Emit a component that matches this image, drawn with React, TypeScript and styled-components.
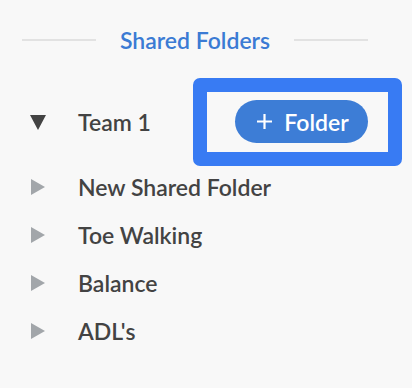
import React from "react";
import styled, { createGlobalStyle } from "styled-components";

const Global = createGlobalStyle`
  html, body { margin: 0; padding: 0; background: #f8f8f8; }
  body { font-family: Lato, "Noto Sans", sans-serif; }
`;

const Page = styled.div`
  width: 412px;
  height: 388px;
  background: #f8f8f8;
  padding-top: 20px;
  box-sizing: border-box;
`;

const Header = styled.div`
  display: flex;
  align-items: center;
  width: 346px;
  margin-left: 22px;
  height: 40px;
  gap: 24px;
`;

const Line = styled.div`
  flex: 1;
  height: 2px;
  background: #e2e2e2;
`;

const Title = styled.div`
  color: #3b7bd4;
  font-size: 23px;
  font-weight: 600;
  white-space: nowrap;
`;

const Tree = styled.div`
  margin-top: 18px;
`;

const TeamRow = styled.div`
  display: grid;
  grid-template-columns: 48px 115px auto;
  align-items: center;
  height: 88px;
  padding-left: 30px;
`;

const Row = styled.div`
  display: grid;
  grid-template-columns: 47px auto;
  align-items: center;
  height: 48px;
  padding-left: 31px;
`;

const Label = styled.span`
  color: #434343;
  font-size: 23px;
  font-weight: 600;
  white-space: nowrap;
`;

const Children = styled.div`
  margin-top: -3px;
`;

const Highlight = styled.div`
  border: 14px solid #387bf3;
  border-radius: 7px;
  width: 133px;
  height: 43px;
  padding: 8px 20px 9px 28px;
  box-sizing: content-box;
  display: flex;
  align-items: flex-start;
`;

const FolderButton = styled.button`
  display: flex;
  align-items: center;
  justify-content: center;
  gap: 11px;
  width: 133px;
  height: 43px;
  border: none;
  border-radius: 22px;
  background: #3d7dd6;
  color: #fff;
  font-family: Lato, "Noto Sans", sans-serif;
  font-size: 23px;
  font-weight: 600;
  padding: 0 0 0 2px;
  cursor: pointer;
`;

const Tri = ({ down, color }: { down?: boolean; color: string }) =>
  down ? (
    <svg width="16" height="15" viewBox="0 0 16 15">
      <polygon points="0,0 16,0 8,15" fill={color} />
    </svg>
  ) : (
    <svg width="14" height="16" viewBox="0 0 14 16">
      <polygon points="0,0 14,8 0,16" fill={color} />
    </svg>
  );

const Plus = () => (
  <svg width="17" height="17" viewBox="0 0 17 17">
    <path d="M8.5 1v15M1 8.5h15" stroke="#fff" strokeWidth="2.2" />
  </svg>
);

const items = ["New Shared Folder", "Toe Walking", "Balance", "ADL's"];

export default function App() {
  return (
    <Page>
      <Global />
      <Header>
        <Line />
        <Title>Shared Folders</Title>
        <Line />
      </Header>
      <Tree>
        <TeamRow>
          <Tri down color="#434343" />
          <Label>Team 1</Label>
          <Highlight>
            <FolderButton>
              <Plus />
              Folder
            </FolderButton>
          </Highlight>
        </TeamRow>
        <Children>
          {items.map((t) => (
            <Row key={t}>
              <Tri color="#a2a6aa" />
              <Label>{t}</Label>
            </Row>
          ))}
        </Children>
      </Tree>
    </Page>
  );
}
